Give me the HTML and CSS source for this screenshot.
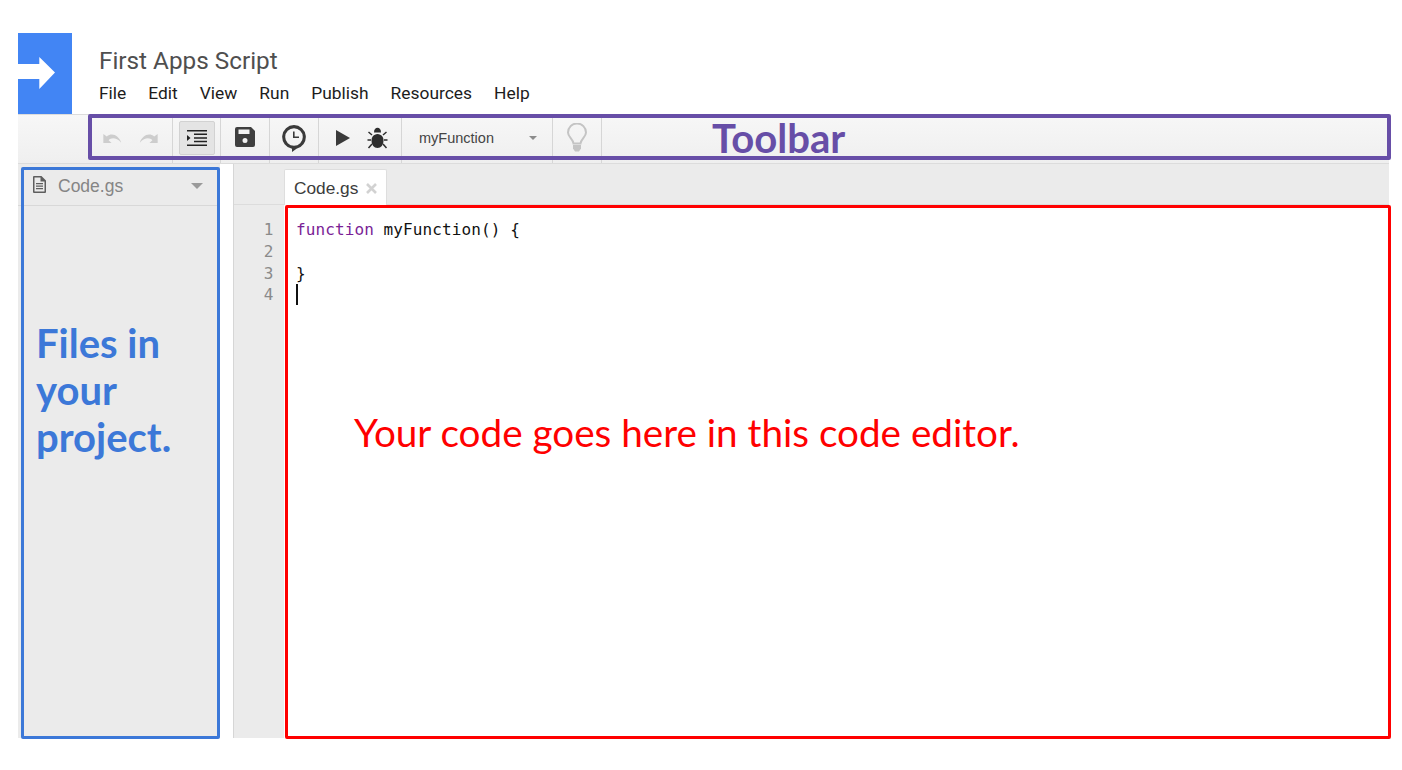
FILE: index.html
```html
<!DOCTYPE html>
<html lang="en">
<head>
<meta charset="utf-8">
<title>First Apps Script</title>
<link rel="stylesheet" href="styles.css">
</head>
<body>
<div class="app">
  <header class="header">
    <div class="logo">
      <svg width="54" height="81" viewBox="0 0 54 81"><path fill="#fff" d="M0 31H21.300V24L37 39.500 21.300 56V46H0z"/></svg>
    </div>
    <div class="titles">
      <div class="title">First Apps Script</div>
      <nav class="menu"><span>File</span><span>Edit</span><span>View</span><span>Run</span><span>Publish</span><span>Resources</span><span>Help</span></nav>
    </div>
  </header>
  <div class="toolbar">
    <div class="tgroup g-history">
      <svg width="21" height="11" viewBox="0 0 22 12"><path fill="#cdcdcd" d="M1 1v10h9L6.800 7.800C9.500 5 15 4.500 20.500 10.500 18 3 10.500-1 4.800 3.800z"/></svg>
      <svg width="21" height="11" viewBox="0 0 22 12"><path fill="#cdcdcd" d="M21 1v10h-9l3.200-3.200C12.500 5 7 4.500 1.500 10.500 4 3 11.500-1 17.200 3.800z"/></svg>
    </div>
    <div class="tgroup g-indent">
      <div class="pressed">
        <svg width="20" height="16" viewBox="0 0 20 16"><path fill="#222" d="M0 0h20v1.500H0zM7 3.600h13v1.500H7zM7 7.200h13v1.500H7zM7 10.800h13v1.500H7zM0 14.500h20V16H0zM0 5l3.500 3L0 11z"/></svg>
      </div>
    </div>
    <div class="tgroup g-save">
      <svg width="20" height="20" viewBox="0 0 20 20"><path fill="#3f3f3f" fill-rule="evenodd" d="M2 0h14l4 4v14a2 2 0 0 1-2 2H2a2 2 0 0 1-2-2V2a2 2 0 0 1 2-2zM3.500 2.500v4.500h11V2.500zM10 11a2.500 2.500 0 1 0 0 5 2.500 2.500 0 0 0 0-5z"/></svg>
    </div>
    <div class="tgroup g-clock">
      <svg width="24" height="27" viewBox="0 0 24 27"><path fill="#3a3a3a" fill-rule="evenodd" d="M12 0a12 12 0 0 1 2.500 23.700L10 27v-3.200A12 12 0 0 1 12 0zm0 3.200a8.800 8.800 0 1 0 0 17.600 8.800 8.800 0 0 0 0-17.600zM11 6.500h1.600v5h4.400v1.600h-6z"/></svg>
    </div>
    <div class="tgroup g-run">
      <svg width="14" height="16" viewBox="0 0 14 16"><path fill="#3a3a3a" d="M0 0l14 8-14 8z"/></svg>
      <svg width="21" height="22" viewBox="0 0 21 22"><g fill="#2e2e2e"><path d="M10.500 7c4 .5 6 2.800 6 6.500 0 4.500-2.500 7.500-6 7.500s-6-3-6-7.500c0-3.700 2-6 6-6.500z"/><path d="M10.500.800c2 0 3.500 1.500 3.500 4.700H7C7 2.300 8.500.800 10.500.800z"/></g><path fill="none" stroke="#2e2e2e" stroke-width="1.500" d="M5 8L1.500 5M16 8l3.500-3M4 13H.5M17 13h3.500M5 17l-3.500 4M16 17l3.500 4"/></svg>
    </div>
    <div class="tgroup g-select">
      <span class="fn">myFunction</span>
      <span class="caret small"></span>
    </div>
    <div class="tgroup g-bulb">
      <svg width="20" height="29" viewBox="0 0 20 29"><path fill="none" stroke="#c4c4c4" stroke-width="2" d="M6.500 20.500C6 16 1 14 1 9.500a9 9 0 0 1 18 0c0 4.500-5 6.500-5.500 11z"/><path fill="#c4c4c4" d="M6 22h8v3.500l-2 3H8l-2-3z"/></svg>
    </div>
  </div>
  <div class="main">
    <aside class="sidebar">
      <div class="file-row">
        <svg width="13" height="17" viewBox="0 0 13 17"><path fill="#5e5e5e" fill-rule="evenodd" d="M1 0h7.500L13 4.500V16a1 1 0 0 1-1 1H1a1 1 0 0 1-1-1V1a1 1 0 0 1 1-1zM1.500 1.500v14h10V5.500H7.500v-4zM3 7h7v1.200H3zm0 2.500h7v1.200H3zM3 12h7v1.200H3z"/></svg>
        <span class="file-name">Code.gs</span>
        <span class="caret"></span>
      </div>
    </aside>
    <div class="spacer"></div>
    <section class="work">
      <div class="tabs">
        <div class="tab"><span>Code.gs</span>
          <svg class="close" width="11" height="11" viewBox="0 0 11 11"><path fill="none" stroke="#d2d2d2" stroke-width="2.600" d="M1 1l9 9M10 1l-9 9"/></svg>
        </div>
      </div>
      <div class="editor">
        <div class="gutter"><div>1</div><div>2</div><div>3</div><div>4</div></div>
        <div class="code">
          <div><span class="kw">function</span> myFunction() {</div>
          <div>&nbsp;</div>
          <div>}</div>
          <div><span class="cursor"></span></div>
        </div>
      </div>
    </section>
  </div>
</div>
<div class="note box-toolbar"><span class="label-toolbar">Toolbar</span></div>
<div class="note box-files"><span class="label-files">Files in your project.</span></div>
<div class="note box-code"><span class="label-code">Your code goes here in this code editor.</span></div>
</body>
</html>
```
FILE: styles.css
```css
* { box-sizing: border-box; }
html, body { margin: 0; height: 100%; background: #fff; overflow: hidden; }
body { font-family: Roboto, "Liberation Sans", sans-serif; position: relative; }

.app { margin: 33px 13px 0 18px; height: 705px; display: flex; flex-direction: column; }

.header { display: flex; height: 81px; flex: none; }
.logo { width: 54px; height: 81px; background: #4285f4; flex: none; }
.logo svg { display: block; }
.titles { padding: 13px 0 0 27px; }
.title { font-size: 24.300px; line-height: 30px; color: #4f4f4f; }
.menu { display: flex; gap: 22px; margin-top: 5px; font-size: 17.400px; line-height: 24px; color: #1c1c1c; }

.toolbar { height: 50px; flex: none; display: flex; padding-left: 76px; border-top: 1px solid #dcdcdc; border-bottom: 1px solid #dcdcdc; background: linear-gradient(#f7f7f7, #efefef); }
.tgroup { display: flex; align-items: center; border-right: 1px solid #d6d6d6; flex: none; height: 100%; }
.g-history { width: 79px; justify-content: center; gap: 15px; padding: 0 5px 2px 0; }
.g-indent { width: 48px; justify-content: center; }
.pressed { width: 36px; height: 34px; display: flex; align-items: center; justify-content: center; background: #e4e4e4; border: 1px solid #d2d2d2; border-radius: 2px; margin-bottom: 2px; }
.g-save { width: 49px; justify-content: center; padding-bottom: 4px; }
.g-clock { width: 49px; justify-content: center; padding-bottom: 1px; }
.g-run { width: 83px; padding: 0 13px 3px 17px; justify-content: space-between; }
.g-select { width: 151px; padding: 0 15px 2px 17px; justify-content: space-between; }
.fn { font-family: "Liberation Sans", Arial, sans-serif; font-size: 14.500px; color: #444; }
.g-bulb { width: 49px; justify-content: center; padding-bottom: 4px; }

.caret { width: 0; height: 0; border-left: 6.500px solid transparent; border-right: 6.500px solid transparent; border-top: 6px solid #9a9a9a; }
.caret.small { border-left-width: 4.500px; border-right-width: 4.500px; border-top-width: 4px; border-top-color: #8c8c8c; }

.main { flex: 1; display: flex; min-height: 0; }
.sidebar { width: 202px; background: #ebebeb; flex: none; }
.file-row { height: 42px; display: flex; align-items: center; padding: 3px 17px 0 15px; border-bottom: 1px solid #d8d8d8; }
.file-row svg { margin-top: -3px; }
.file-name { font-family: "Liberation Sans", Arial, sans-serif; font-size: 17.500px; color: #858585; margin-left: 12px; flex: 1; }

.spacer { width: 13px; flex: none; }
.work { flex: 1; min-width: 0; display: flex; flex-direction: column; background: #ebebeb; border-left: 1px solid #d6d6d6; }

.tabs { height: 41px; flex: none; padding: 5px 0 0 50px; border-bottom: 1px solid #dcdcdc; display: flex; }
.tab { width: 103px; height: 36px; background: #fff; border: 1px solid #dedede; border-bottom: none; display: flex; align-items: center; padding: 2px 0 0 9px; font-family: "Liberation Sans", Arial, sans-serif; font-size: 17.300px; color: #3c3c3c; border-radius: 2px 2px 0 0; }
.close { margin-left: 8px; }

.editor { flex: 1; display: flex; min-height: 0; }
.gutter { width: 50px; flex: none; padding: 14px 10.500px 0 0; text-align: right; font-family: "DejaVu Sans Mono", monospace; font-size: 16px; line-height: 21.800px; color: #8a8a8a; }
.code { flex: 1; background: #fff; padding: 14px 0 0 12px; font-family: "DejaVu Sans Mono", monospace; font-size: 16px; letter-spacing: 0.100px; line-height: 21.800px; color: #111; }
.kw { color: #7a1e96; }
.cursor { display: inline-block; width: 1.500px; height: 21px; background: #111; vertical-align: top; }

.note { position: absolute; border-radius: 2px; font-family: Lato, sans-serif; }
.box-toolbar { left: 88px; top: 114px; width: 1303px; height: 46px; border: 4px solid #674ea7; }
.label-toolbar { position: absolute; left: 620px; top: -3px; font-size: 40.100px; line-height: 46px; font-weight: 700; color: #674ea7; }
.box-files { left: 21px; top: 167px; width: 199px; height: 572px; border: 3px solid #3c78d8; }
.label-files { position: absolute; left: 12px; top: 150px; width: 170px; font-size: 40px; line-height: 47px; font-weight: 700; color: #3c78d8; }
.box-code { left: 285px; top: 205px; width: 1106px; height: 534px; border: 3px solid #ff0000; }
.label-code { position: absolute; left: 66px; top: 201px; font-size: 38.670px; line-height: 47px; color: #ff0000; white-space: nowrap; }
```
